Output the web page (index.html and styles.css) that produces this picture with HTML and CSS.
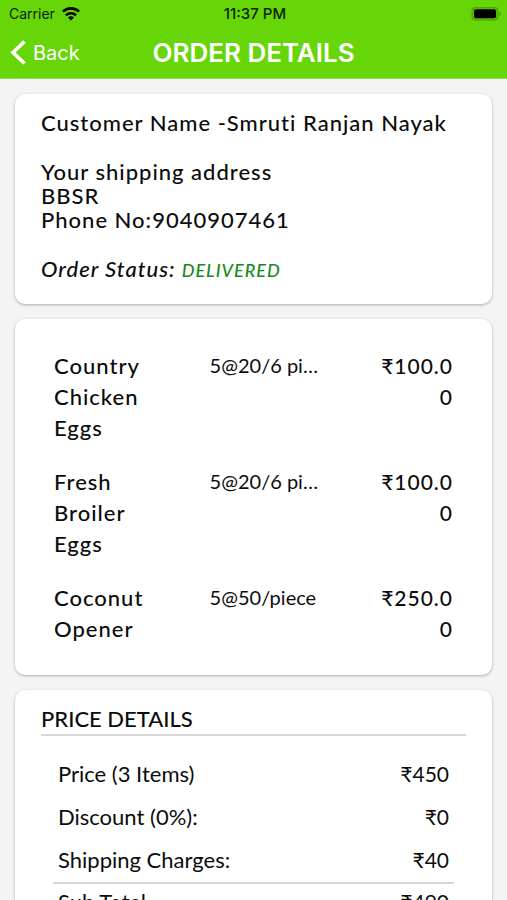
FILE: index.html
```html
<!DOCTYPE html>
<html lang="en">
<head>
<meta charset="utf-8">
<meta name="viewport" content="width=device-width, initial-scale=1">
<title>Order Details</title>
<link rel="stylesheet" href="styles.css">
</head>
<body>
<header class="header">
  <div class="status">
    <div class="carrier">
      <span>Carrier</span>
      <svg class="wifi" viewBox="0 0 18 14" aria-hidden="true">
        <g fill="none" stroke="currentColor" stroke-width="2.6">
          <path d="M0.9 4.6C5.4 0.3 12.6 0.3 17.1 4.6"/>
          <path d="M3.9 8.2C6.8 5.5 11.2 5.5 14.1 8.2"/>
        </g>
        <path fill="currentColor" d="M6 10.4C7.7 8.9 10.3 8.9 12 10.4L9 13.4Z"/>
      </svg>
    </div>
    <time class="clock">11:37 PM</time>
    <svg class="battery" viewBox="0 0 30 14" aria-hidden="true">
      <rect x="0.5" y="0" width="27" height="13.5" rx="4" fill="#4da008"/>
      <rect x="1.5" y="1" width="25" height="11.5" rx="3" fill="#58b908"/>
      <rect x="3" y="2.3" width="22" height="9" rx="2" fill="#000"/>
      <path d="M28.4 4.6C30.4 5.4 30.4 8.2 28.4 9Z" fill="#4da008"/>
    </svg>
  </div>
  <nav class="nav">
    <a class="back" href="#">
      <svg class="chevron" viewBox="0 0 16 26" aria-hidden="true"><path d="M14.5 1.5L3 12.5L14.5 23.5" fill="none" stroke="currentColor" stroke-width="3.6"/></svg>
      <span>Back</span>
    </a>
    <h1 class="title">ORDER DETAILS</h1>
  </nav>
</header>
<main class="content">
  <section class="card customer">
    <p>Customer Name -Smruti Ranjan Nayak</p>
    <address class="address">Your shipping address<br>BBSR<br>Phone No:9040907461</address>
    <p class="order-status">Order Status: <span class="delivered">DELIVERED</span></p>
  </section>
  <section class="card order">
    <table class="items">
      <tbody>
        <tr><th scope="row" class="name">Country Chicken Eggs</th><td class="qty">5@20/6 pieces</td><td class="amount">₹100.00</td></tr>
        <tr><th scope="row" class="name">Fresh Broiler Eggs</th><td class="qty">5@20/6 pieces</td><td class="amount">₹100.00</td></tr>
        <tr><th scope="row" class="name">Coconut Opener</th><td class="qty">5@50/piece</td><td class="amount">₹250.00</td></tr>
      </tbody>
    </table>
  </section>
  <section class="card price">
    <h2 class="subtitle">PRICE DETAILS</h2>
    <table class="totals">
      <tbody>
        <tr><th scope="row">Price (3 Items)</th><td>₹450</td></tr>
        <tr><th scope="row">Discount (0%):</th><td>₹0</td></tr>
        <tr><th scope="row">Shipping Charges:</th><td>₹40</td></tr>
      </tbody>
      <tfoot>
        <tr><th scope="row">Sub Total</th><td>₹490</td></tr>
      </tfoot>
    </table>
  </section>
</main>
</body>
</html>
```
FILE: styles.css
```css
* { box-sizing: border-box; }

html { scrollbar-width: none; }

body {
  margin: 0;
  background: #f4f4f4;
  color: #0c0c0c;
  font-family: Lato, "Noto Sans", sans-serif;
  font-size: 20px;
  line-height: 24px;
}

h1, h2, p { margin: 0; }

th, td {
  padding: 0;
  font-weight: 400;
  text-align: left;
  vertical-align: top;
}

.header {
  background: #67d609;
  border-bottom: 1px solid #8fdc52;
  font-family: Inter, "Liberation Sans", sans-serif;
}

.status {
  display: grid;
  grid-template-columns: 1fr auto 1fr;
  align-items: center;
  height: 28px;
  padding: 0 6px 0 9px;
  color: #0b2200;
  font-size: 14px;
}

.carrier { display: flex; align-items: center; gap: 7px; }
.wifi { width: 18px; height: 14px; color: #000; }
.clock { font-size: 15px; font-weight: 500; }
.battery { width: 30px; height: 14px; justify-self: end; }

.nav {
  display: grid;
  grid-template-columns: 1fr auto 1fr;
  align-items: center;
  height: 50px;
  padding: 0 10px;
  color: #fff;
}

.back {
  display: flex;
  align-items: center;
  gap: 7px;
  color: inherit;
  text-decoration: none;
}

.chevron { width: 16px; height: 26px; }
.title { font-size: 26px; font-weight: 600; }

.content {
  display: grid;
  gap: 15px;
  padding: 15px;
}

.card {
  background: #fff;
  border-radius: 10px;
  box-shadow: 0 1px 3px rgba(0, 0, 0, 0.3);
}

.customer {
  display: grid;
  gap: 25px;
  padding: 17px 26px 22px;
  font-size: 22px;
  font-weight: 500;
  letter-spacing: 1px;
}

.address { font-style: normal; }
.order-status { font-style: italic; }
.delivered { color: #158a1b; font-size: 18px; }

.order { padding: 31px 39px 8px; }

.items, .totals {
  width: 100%;
  border-collapse: collapse;
  table-layout: fixed;
}

.items { line-height: 31px; }
.items th, .items td { padding-bottom: 23px; }

.items .name {
  width: 39%;
  padding-right: 40px;
  font-size: 22px;
  font-weight: 500;
  letter-spacing: 1px;
}

.items .qty {
  width: 28%;
  overflow: hidden;
  text-overflow: ellipsis;
  white-space: nowrap;
}

.items .amount {
  padding-left: 52px;
  font-size: 21px;
  font-weight: 500;
  letter-spacing: 1px;
  overflow-wrap: anywhere;
  text-align: right;
}

.price { padding: 17px 26px 20px; }

.subtitle {
  padding-bottom: 3px;
  border-bottom: 2px solid #d8d8d8;
  font-size: 22px;
  font-weight: 500;
}

.totals {
  width: auto;
  margin: 17px 12px 0;
  display: grid;
}

.totals tr {
  display: flex;
  justify-content: space-between;
  padding: 9px 5px 10px;
}

.totals th { font-size: 22px; }
.totals td { font-size: 21px; }

.totals tfoot { border-top: 2px solid #d8d8d8; }
.totals tfoot tr { padding-top: 6px; }
```
